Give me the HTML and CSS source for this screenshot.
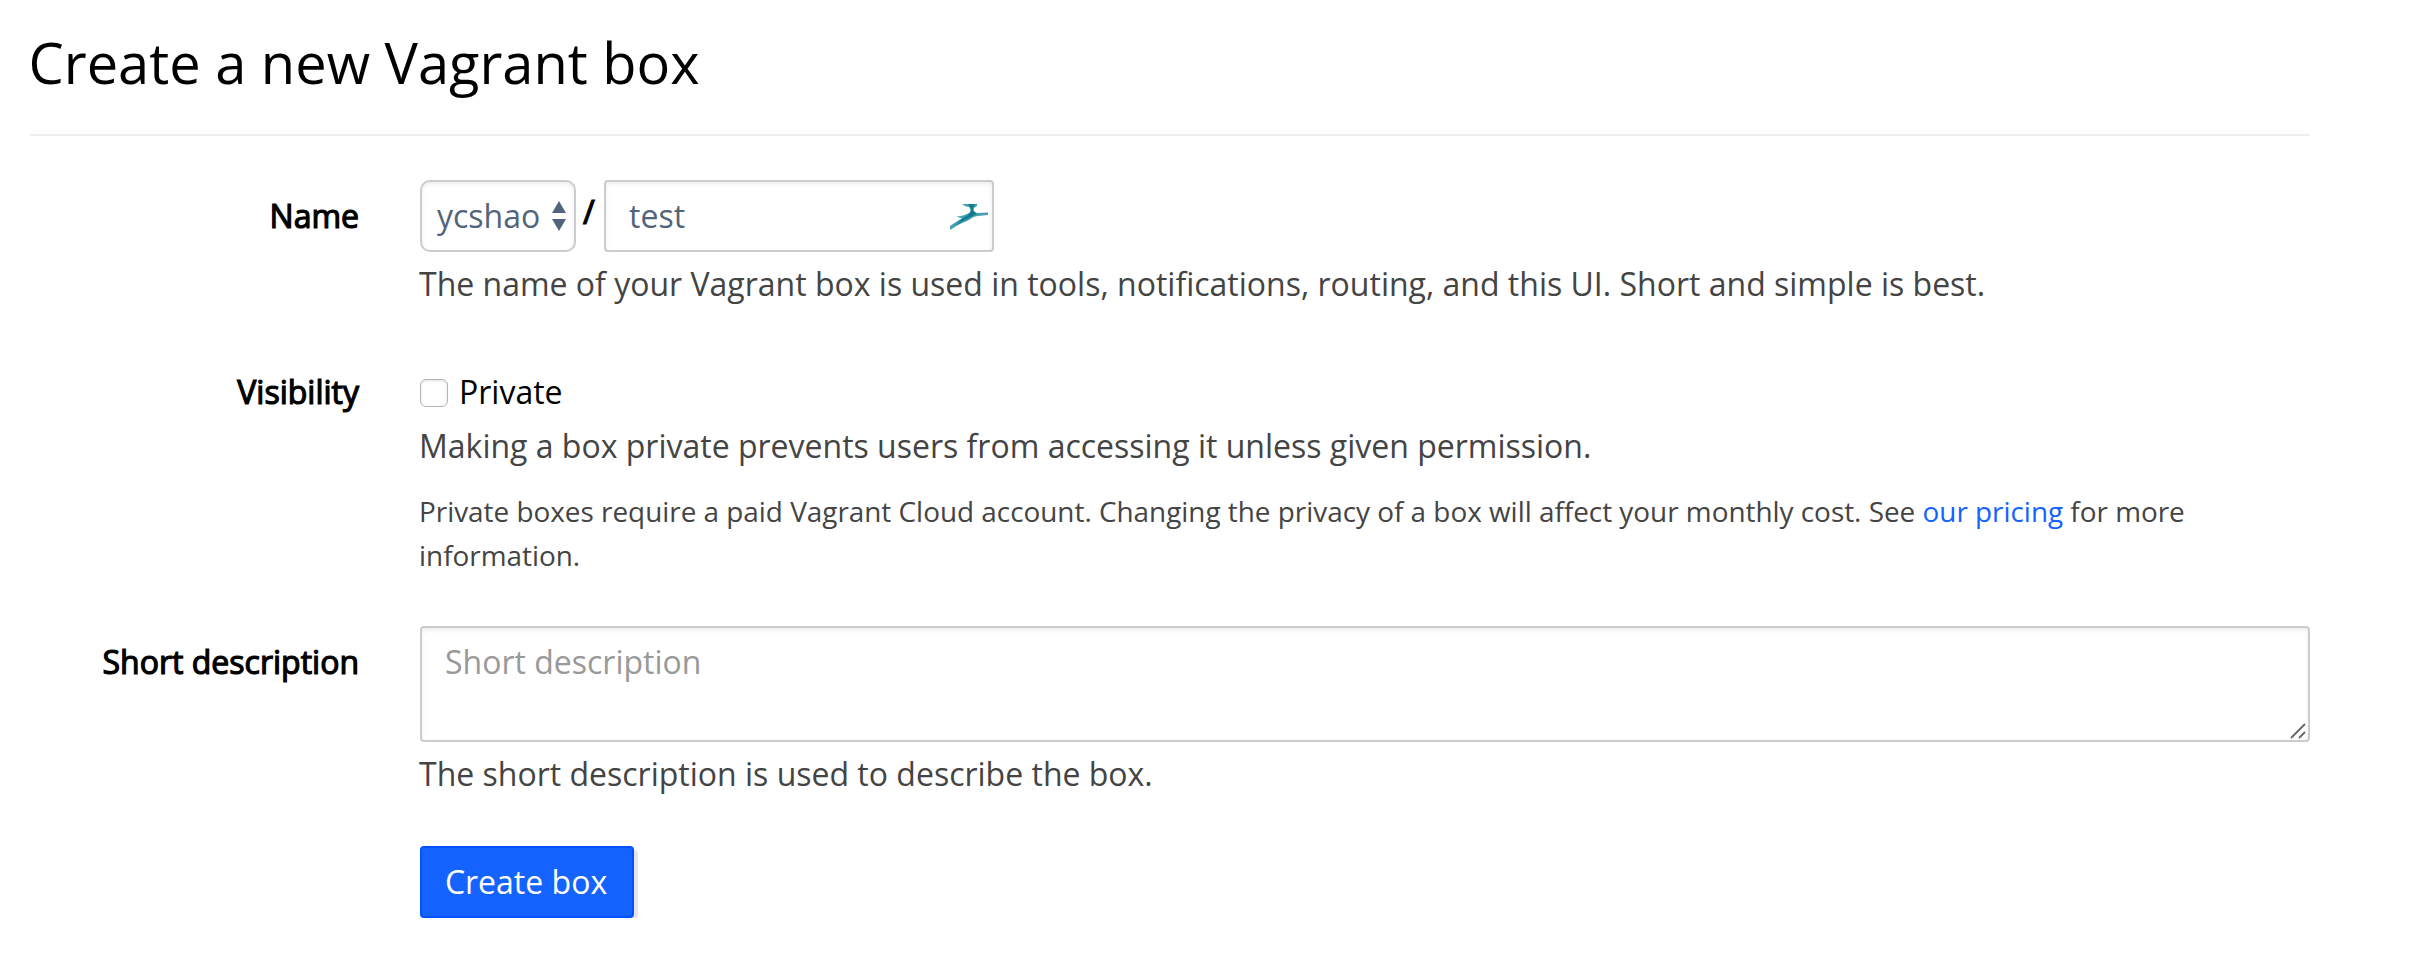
FILE: index.html
```html
<!DOCTYPE html>
<html lang="en">
<head>
<meta charset="utf-8">
<title>Create a new Vagrant box</title>
<link rel="stylesheet" href="styles.css">
</head>
<body>
<main class="page">
  <h1 class="title">Create a new Vagrant box</h1>
  <form class="form">
    <div class="row row-name">
      <label class="label label-control">Name</label>
      <div class="field">
        <div class="controls">
          <div class="select">
            <span>ycshao</span>
            <svg class="arrows" width="14" height="30" viewBox="0 0 14 30"><path d="M7 0L14 12H0ZM0 18H14L7 30Z" fill="#52647c"/></svg>
          </div>
          <span class="slash">/</span>
          <div class="input">
            <span>test</span>
            <svg class="bird" width="38" height="26" viewBox="0 0 38 26">
              <path d="M12 0H27V2L24 4C23 7 25 8 27 9L38 8.5V11L28 12C24 12 21 15 17 17C11 19 6 22 0 26V22L12 14C10 14 8 13 6 12C10 13 15 11 19 9C21 8 21 5 19 3C17 3 14 2 12 0Z" fill="#46a0b0"/>
              <path d="M18 0H25L23 4V7L27 10C22 12 19 14 15 16L5 22L13 14C18 11 21 9 21 5Z" fill="#117b92"/>
            </svg>
          </div>
        </div>
        <p class="help">The name of your Vagrant box is used in tools, notifications, routing, and this UI. Short and simple is best.</p>
      </div>
    </div>
    <div class="row row-visibility">
      <label class="label">Visibility</label>
      <div class="field">
        <label class="check"><span class="box"></span>Private</label>
        <p class="hint">Making a box private prevents users from accessing it unless given permission.</p>
        <p class="small">Private boxes require a paid Vagrant Cloud account. Changing the privacy of a box will affect your monthly cost. See <a class="link" href="#">our pricing</a> for more information.</p>
      </div>
    </div>
    <div class="row row-description">
      <label class="label label-control">Short description</label>
      <div class="field">
        <div class="textarea">
          <span>Short description</span>
          <svg class="grip" width="16" height="16" viewBox="0 0 16 16"><path d="M1 15L15 1M9 15L15 9" stroke="#666" stroke-width="1.8" fill="none"/></svg>
        </div>
        <p class="help">The short description is used to describe the box.</p>
      </div>
    </div>
    <div class="row row-actions">
      <span></span>
      <div class="field"><button class="button" type="button">Create box</button></div>
    </div>
  </form>
</main>
</body>
</html>
```
FILE: styles.css
```css
* {
  box-sizing: border-box;
}

body {
  margin: 0;
  background: #fff;
  color: #000;
  font: 32px/44px "Open Sans", sans-serif;
}

p {
  margin: 0;
}

.page {
  width: 2310px;
  padding: 24px 0 0 30px;
}

.title {
  margin: 0;
  padding-bottom: 34px;
  border-bottom: 2px solid #eee;
  font-size: 56px;
  font-weight: 400;
  line-height: 76px;
  text-indent: -1.5px;
}

.form {
  padding-top: 44px;
}

.row {
  display: grid;
  grid-template-columns: 329px 1890px;
  column-gap: 61px;
}

.row-visibility {
  margin-top: 64px;
}

.row-description {
  margin-top: 49px;
}

.row-actions {
  margin-top: 50px;
}

.label {
  text-align: right;
  -webkit-text-stroke: 1.2px #000;
}

.label-control {
  padding-top: 14px;
}

.controls {
  display: flex;
}

.select,
.input,
.textarea {
  display: flex;
  border: 2px solid #ccc;
  border-radius: 4px;
  box-shadow: inset 0 2px 4px rgba(0, 0, 0, 0.08);
  color: #52647c;
}

.select,
.input {
  align-items: center;
  justify-content: space-between;
  height: 72px;
}

.select {
  width: 156px;
  padding: 0 8px 0 15px;
  border-radius: 10px;
}

.slash {
  width: 28px;
  padding-top: 10px;
  padding-left: 7px;
  -webkit-text-stroke: 1.2px #000;
}

.input {
  width: 390px;
  padding: 0 4px 0 23px;
}

.bird {
  margin-top: 2px;
  filter: blur(0.4px);
}

.help,
.hint,
.small {
  margin-left: -1px;
  color: #444;
}

.help {
  margin-top: 10px;
}

.hint {
  margin-top: 10px;
}

.small {
  margin-top: 21px;
  font-size: 27.88px;
}

.link {
  color: #1563ff;
  text-decoration: none;
}

.check {
  display: flex;
  align-items: center;
  gap: 11px;
}

.box {
  width: 28px;
  height: 28px;
  margin-top: 2px;
  border: 1px solid #b5b5b5;
  border-radius: 6px;
  box-shadow: inset 0 1px 3px rgba(0, 0, 0, 0.12);
}

.textarea {
  justify-content: space-between;
  height: 116px;
  padding: 12px 2px 1px 23px;
  color: #999;
}

.grip {
  align-self: flex-end;
}

.button {
  display: block;
  width: 214px;
  height: 72px;
  padding: 0 2px 0 0;
  border: 2px solid #0052ff;
  border-radius: 4px;
  background: #1563ff;
  box-shadow: 4px 4px 0 #e5e5e5;
  color: #fff;
  font: inherit;
}
```
